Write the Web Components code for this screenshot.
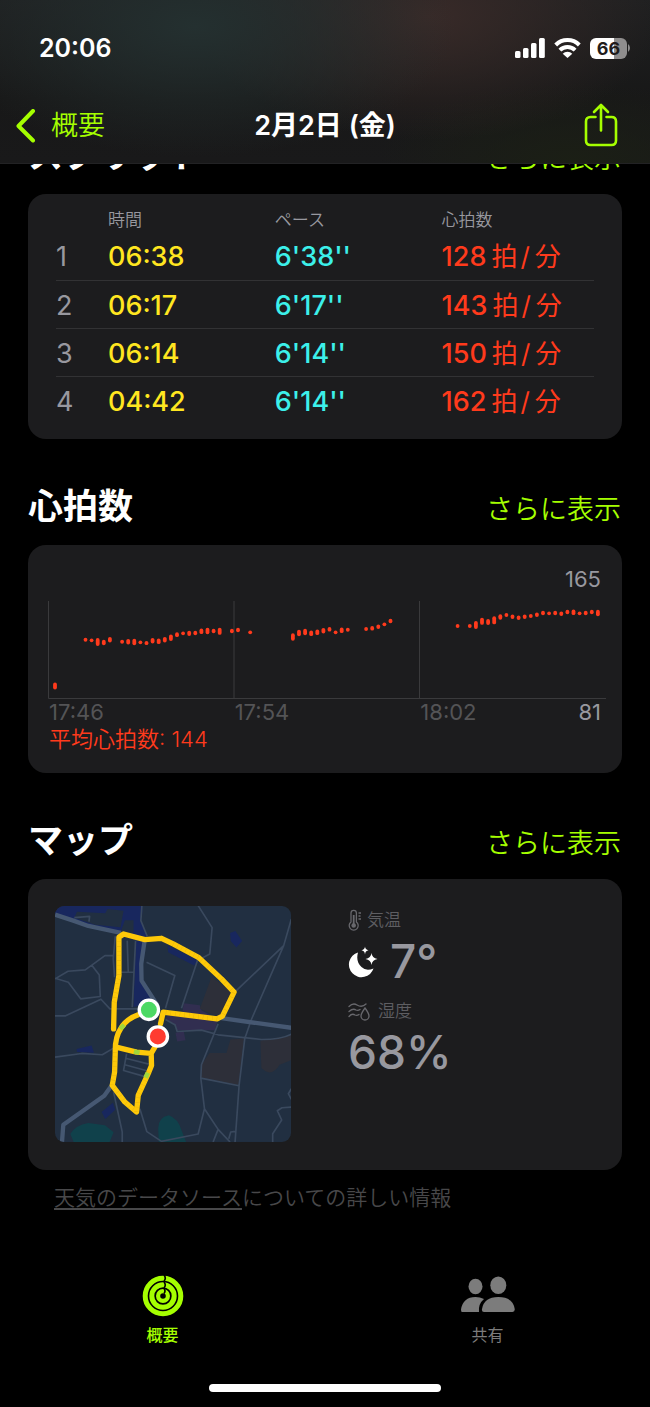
<!DOCTYPE html>
<html lang="ja">
<head>
<meta charset="utf-8">
<meta name="viewport" content="width=device-width, initial-scale=1">
<title>2月2日(金)</title>
<style>
  html { background: #000; }
  body {
    margin: 0;
    background: #000;
    color: #fff;
    font-family: Inter, "Noto Sans CJK JP", sans-serif;
    --accent: #a5ff00;
    --card: #1c1c1e;
    --gray: #98989f;
    --dim: #545456;
    --line: #323234;
    --red: #ff3a1c;
  }
</style>
</head>
<body>
<workout-page></workout-page>

<script>
const define = (name, html, setup) => {
  const tpl = document.createElement('template');
  tpl.innerHTML = html;
  customElements.define(name, class extends HTMLElement {
    constructor() {
      super();
      this.attachShadow({ mode: 'open' }).append(tpl.content.cloneNode(true));
    }
    connectedCallback() { if (setup) setup(this, this.shadowRoot); }
  });
};

define('status-bar', `
<style>
  :host { display: flex; justify-content: space-between; align-items: center; height: 80px; padding: 8px 19px 0 39px; }
  time { font-size: 25px; line-height: 30px; font-weight: 600; }
  .icons { display: flex; align-items: center; gap: 9px; }
  svg { display: block; }
  .battery { display: flex; align-items: center; gap: 1px; }
  .level {
    width: 37px; height: 21px; border-radius: 6px; text-align: center;
    font-size: 18px; line-height: 21px; font-weight: 700; color: #1f1c1c;
    background: linear-gradient(90deg, #fff 66%, #8f8d8d 66%);
  }
</style>
<time>20:06</time>
<div class="icons">
  <svg width="30" height="20" viewBox="0 0 30 20" fill="#fff" aria-hidden="true">
    <rect x="0" y="13" width="5.500" height="7" rx="1.500"/><rect x="8" y="10" width="5.500" height="10" rx="1.500"/>
    <rect x="16" y="5" width="5.500" height="15" rx="1.500"/><rect x="24" y="0" width="5.800" height="20" rx="1.500"/>
  </svg>
  <svg width="27" height="20" viewBox="0 0 27 20" aria-hidden="true">
    <g fill="none" stroke="#fff" stroke-width="4"><path d="M1.700 7a16.700 16.700 0 0 1 23.600 0"/><path d="M5.900 12.200a10.700 10.700 0 0 1 15.200 0"/></g>
    <path fill="#fff" d="M8.700 15.800a6.800 6.800 0 0 1 9.600 0L13.500 20z"/>
  </svg>
  <div class="battery"><span class="level">66</span>
    <svg width="3" height="8" viewBox="0 0 3 8" aria-hidden="true"><path fill="#8f8d8d" d="M0 0a5 5 0 0 1 0 8z"/></svg>
  </div>
</div>`);

define('nav-bar', `
<style>
  :host { display: grid; grid-template-columns: 1fr auto 1fr; align-items: center; height: 75px; padding: 0 16px; }
  a { display: flex; align-items: center; gap: 15px; color: var(--accent); text-decoration: none; font-size: 27px; line-height: 32px; font-weight: 350; }
  h1 { margin: 0; font-size: 27px; line-height: 32px; font-weight: 600; }
  button { justify-self: end; margin: 0 16px 2px 0; padding: 0; border: 0; background: none; color: var(--accent); }
  svg { display: block; fill: none; stroke: currentColor; stroke-linecap: round; stroke-linejoin: round; }
</style>
<a href="#summary"><svg width="20" height="34" viewBox="0 0 20 34" stroke-width="4"><path d="M17 2 2.500 17 17 31.500"/></svg><span>概要</span></a>
<h1><slot></slot></h1>
<button aria-label="共有"><svg width="34" height="44" viewBox="0 0 34 44" stroke-width="2.600">
  <path d="M11.500 14H6.500Q2 14 2 18.500V37.500Q2 42 6.500 42H27.500Q32 42 32 37.500V18.500Q32 14 27.500 14H22.500M17 27.500V2.500M10 9 17 2l7 7"/>
</svg></button>`);

define('top-header', `
<style>
  :host {
    display: block; position: sticky; top: 0; z-index: 2; border-bottom: 1px solid #222224;
    background:
      radial-gradient(ellipse 40% 80% at 30% 16%, #243030, #24303000),
      radial-gradient(ellipse 36% 76% at 66% 10%, #382a28, #382a2800),
      radial-gradient(ellipse 30% 50% at 88% 100%, #1b1f15, #1b1f1500),
      linear-gradient(#1f2021, #181818 60%, #19191a);
  }
</style>
<slot></slot>`);

define('metric-section', `
<style>
  :host { display: block; }
  header { display: flex; justify-content: space-between; align-items: baseline; height: 64px; padding: 42px 1px 0 0; }
  h2 { margin: 0; font-size: 35px; line-height: 50px; font-weight: 700; }
  a { color: var(--accent); font-size: 27px; line-height: 40px; font-weight: 350; text-decoration: none; }
  .card { background: var(--card); border-radius: 18px; }
</style>
<header><h2></h2><a href="#more">さらに表示</a></header>
<div class="card"><slot></slot></div>`,
(el, root) => { root.querySelector('h2').textContent = el.getAttribute('heading'); });

define('splits-table', `
<style>
  :host { display: block; padding: 0 28px 15px; }
  table { width: 100%; table-layout: fixed; border-collapse: separate; border-spacing: 0; }
  th, td { box-sizing: border-box; padding: 0; text-align: left; white-space: nowrap; }
  thead th { height: 38px; padding-top: 14px; font-size: 17px; line-height: 24px; font-weight: 350; color: var(--gray); }
  .n { width: 52px; } .w { width: 31%; }
  tbody th, td { height: 48px; padding-top: 2px; font-size: 27px; line-height: 40px; font-weight: 500; }
  tbody th { color: var(--gray); font-weight: 400; }
  tbody tr + tr > * { border-top: 1px solid var(--line); }
  .time { color: #ffe620; } .pace { color: #3cf0ea; } .bpm { color: var(--red); }
  .unit { margin-left: 5px; font-size: 26px; font-weight: 400; }
  .unit i { font-style: normal; margin: 0 5px 0 3px; }
</style>
<table>
  <thead><tr><th class="n"></th><th class="w">時間</th><th class="w">ペース</th><th>心拍数</th></tr></thead>
  <tbody></tbody>
</table>`,
(el, root) => {
  const rows = [['06:38', `6'38''`, 128], ['06:17', `6'17''`, 143], ['06:14', `6'14''`, 150], ['04:42', `6'14''`, 162]];
  root.querySelector('tbody').innerHTML = rows.map(([t, p, b], i) =>
    `<tr><th scope="row">${i + 1}</th><td class="time">${t}</td><td class="pace">${p}</td><td class="bpm">${b}<span class="unit">拍<i>/</i>分</span></td></tr>`).join('');
});

define('heart-chart', `
<style>
  :host { display: block; padding: 20px 16px 20px 20px; font-size: 22px; line-height: 28px; color: var(--gray); }
  .max { padding-right: 5px; text-align: right; }
  svg { display: block; width: 100%; margin-top: 8px; }
  .axis { display: grid; grid-template-columns: repeat(3, 1fr); line-height: 27px; color: var(--dim); padding-left: 1px; }
  .last { display: flex; justify-content: space-between; padding-right: 5px; }
  .last b { font-weight: 400; color: var(--gray); }
  p { margin: 0; padding-left: 1px; line-height: 27px; color: var(--red); font-weight: 350; }
</style>
<div class="max">165</div>
<svg viewBox="0 0 558 98" role="img" aria-label="心拍数"><path d="M.5 0V97.500H558M186 0V97M371.500 0V97" fill="none" stroke="#3a3a3c"/><g stroke="#ff3a1c" stroke-width="3.800" stroke-linecap="round"></g></svg>
<div class="axis"><span>17:46</span><span>17:54</span><span class="last">18:02<b>81</b></span></div>
<p>平均心拍数: 144</p>`,
(el, root) => {
  // [sample index, centre of the range, height of the range]
  const samples = [[0,85,7],[5,38.7,4],[6,39.3,3.8],[7,41,8],[8,41.5,5.5],[9,38.7,5.5],[11,40.7,4],[12,40.7,5.5],[13,41,6.5],[14,41.3,3.8],[15,42,4.2],[16,39.7,5.5],[17,40.3,5.5],[18,38.7,5.5],[19,36.7,6.5],[20,33.7,4.8],[21,32.3,3.8],[22,32.3,5.3],[23,32,4.5],[24,30.3,5.5],[25,30,6.3],[26,30,4.5],[27,30.3,7],[29,30,4.5],[30,29,4.5],[32,31.3,3.8],[39,36,7.5],[40,32,6.5],[41,31,6.5],[42,32.3,5.5],[43,31.3,5.5],[44,29.7,5.5],[45,28.3,4.5],[46,31.3,3.8],[47,29.3,5.5],[48,28.7,4],[51,28,4],[52,27.3,4.5],[53,25.7,4.5],[54,23.3,3.8],[55,20,4.5],[66,25,3.8],[68,25,4],[69,24,8],[70,20.3,7],[71,21,6],[72,19.3,8],[73,16,5.5],[74,14,4],[75,15.7,4.5],[76,16.7,4.5],[77,15.7,4.5],[78,15,4],[79,13.7,4.5],[80,12,4.5],[81,12.3,3.8],[82,12,4.5],[83,12.7,4.5],[84,11,4.5],[85,11.3,5.5],[86,12.3,3.8],[87,12,4.5],[88,11,4.5],[89,12,6.5]];
  root.querySelector('g').innerHTML = samples.map(([i, y, h]) => {
    const half = Math.max(h - 3.8, .02) / 2;
    return `<path d="M${(7 + i * 6.1).toFixed(1)} ${(y - half).toFixed(2)}V${(y + half).toFixed(2)}"/>`;
  }).join('');
});

define('route-map', `
<style>:host { display: block; width: 236px; } svg { display: block; width: 100%; border-radius: 9px; }</style>
<svg viewBox="30 31 709 708" role="img" aria-label="ルートの地図">
  <rect x="30" y="30" width="710" height="710" fill="#212f41"/>
  <g fill="#18275e">
    <path d="M30 30H294L290 75 307 122 288 180 291 260 326 318 262 336 273 140 228 112 85 78 30 55z"/>
    <path d="M368 150 460 193 448 210 370 170zM556 112 572 106 592 136 575 156 558 136zM95 461 140 450 147 472 96 470zM170 650 204 622 211 643 181 671z"/>
  </g>
  <path fill="#212f41" d="M96 48 181 53 188 40 236 45 227 95 150 87 88 66zM240 74H266V112H226zM218 125H273L266 336H214z"/>
  <g fill="#312e50"><path d="M417 323 465 329 470 345 520 370 510 404 397 404 390 386 362 370 373 350 412 354zM392 412 417 408 422 434 397 438z"/></g>
  <g fill="#2d2f39"><path d="M500 245 568 290 530 368 465 340zM557 432 598 429 581 569 469 546 472 505 494 473 545 473zM647 436 740 418V494L705 508Q680 548 650 518z"/></g>
  <g fill="#10414b"><path d="M76 716Q90 690 130 683L180 690 206 711 194 740H86zM340 700Q340 665 372 660 400 670 410 705L424 740H342z"/></g>
  <g fill="none" stroke="#3a495e" stroke-width="5" stroke-linejoin="round">
    <path d="M291 30 288 75 307 122M460 30 502 96 495 175 458 195 410 338M740 70 717 150 570 290M717 150 620 372 600 430 583 571 571 740M30 250 69 227 121 223 180 180H205M30 248 70 260 107 310 166 303 163 238 140 208M30 361H62L168 311 195 340H300M30 485 110 474 172 478 206 458M211 122 205 190 209 245M247 135 250 230M272 135 262 335M220 230H268M305 200 390 240 362 338M88 66 134 62 132 78M390 386 397 408 470 404 520 418 650 432Q710 432 740 416M520 385 470 508 468 548 479 640 460 716 350 738 306 709 285 640M468 548 583 571M479 640 520 702 556 740M520 702 505 740M552 730 558 710 572 708M206 590 232 710V740M740 580 731 595 740 612M740 635 712 637 698 646 711 674 684 715V740M245 475 236 525 298 543M245 489 312 506M240 508 306 526M362 372 390 388"/>
  </g>
  <g fill="none" stroke="#465872" stroke-linejoin="round">
    <path stroke-width="13" d="M30 57 85 75 130 91 228 112M300 130 289 205 290 255 338 330M200 570 178 601 55 688 51 740M530 368 740 397"/>
  </g>
  <path fill="none" stroke="#fec909" stroke-width="16" stroke-linejoin="round" stroke-linecap="round" d="M206 400 208 320 222 240V125L236 115 300 132 350 128 385 145 462 186 530 250 568 290 533 362 517 370 355 350 347 385M280 358Q245 370 228 398 210 425 211 470L209 530 202 570 240 620 275 650 280 600 312 530 320 510 319 474 330 455M214 455 275 470 319 474"/>
  <path fill="none" stroke="#e1ae0a" stroke-width="14" stroke-dasharray="1 13" d="M208 320 222 240V125M385 145 462 186 530 250 568 290 533 362M517 370 355 350M211 470 209 530 202 570 240 620 275 650 280 600 312 530"/>
  <path fill="none" stroke="#a1d73a" stroke-width="14" d="M226 400 238 388M267 468 284 472M302 547 309 532"/>
  <g stroke="#fff" stroke-width="10"><circle cx="312" cy="343" r="29" fill="#4cd964"/><circle cx="339" cy="423" r="29" fill="#ff3b30"/></g>
</svg>`);

define('weather-info', `
<style>
  :host { display: grid; grid-template-columns: auto 1fr; column-gap: 57px; padding: 27px 27px 28px; }
  dl { margin: 0; }
  dt { display: flex; align-items: center; gap: 5px; font-size: 17px; line-height: 28px; font-weight: 350; color: #5e5e62; }
  .humid { gap: 8px; }
  dd { display: flex; align-items: center; gap: 12px; margin: 0 0 8px; height: 55px; font-size: 46px; line-height: 55px; font-weight: 500; color: var(--gray); }
  svg { display: block; flex: none; }
</style>
<slot></slot>
<dl>
  <dt><svg width="14" height="22" viewBox="0 0 14 22" fill="none" stroke="#68686d" stroke-width="1.300">
    <path d="M3 13V4a2.700 2.700 0 0 1 5.400 0V13a4.500 4.500 0 1 1-5.400 0zM10.500 4H13M10.500 7H12.500M10.500 10H13"/><circle cx="5.700" cy="16.500" r="2.300" fill="#68686d" stroke="none"/><path d="M5.700 6V16" stroke-width="1.800"/></svg>気温</dt>
  <dd><svg width="30" height="34" viewBox="0 0 30 34" fill="#fff">
    <path d="M10 7.500A12.600 12.600 0 1 0 25.500 23.500Q18 26.500 13.500 22 7.500 16.500 10 7.500z"/>
    <path d="M23.500 8Q24 13 29.500 14 24 15 23.500 20 23 15 17.500 14 23 13 23.500 8zM17 1.500Q17.300 4.700 20.500 5.300 17.300 5.900 17 9.500 16.700 5.900 13.500 5.300 16.700 4.700 17 1.500z"/></svg>7°</dd>
  <dt class="humid"><svg width="22" height="20" viewBox="0 0 22 20" fill="none" stroke="#68686d" stroke-width="1.300" stroke-linecap="round">
    <path d="M1 5.500Q5 1.500 9 4 14 7 18 3M1 10.500Q5 7 8 9 10 10 12 8.500M1 15.500Q4 12 7 14 9 15 11 13.500M17 7Q21 12.500 21 15a4 4 0 0 1-8 0Q13 12.500 17 7z"/></svg>湿度</dt>
  <dd>68%</dd>
</dl>`);

define('tab-bar', `
<style>
  :host { display: block; padding: 0 0 14px; }
  nav { display: grid; grid-template-columns: 1fr 1fr; }
  a { display: flex; flex-direction: column; align-items: center; gap: 6px; color: #7c7c7c; text-decoration: none; font-size: 16px; line-height: 24px; font-weight: 400; }
  a[aria-current] { color: var(--accent); font-weight: 500; }
  svg { display: block; }
  .home { width: 232px; height: 8px; margin: 37px auto 0; border-radius: 4px; background: #fff; }
</style>
<nav>
  <a href="#summary" aria-current="page">
    <svg width="42" height="42" viewBox="0 0 42 42"><g fill="none" stroke="#a5ff00" stroke-width="5">
      <circle cx="21" cy="21" r="17.800"/><circle cx="21" cy="21" r="11.200"/><circle cx="21" cy="21" r="4.900" stroke-width="4.200"/></g>
      <path d="M22 0Q24.500 3.300 22 6M22 7Q24.500 10 22 13M22 13.500Q24 16 22 18.500" fill="none" stroke="#000" stroke-width="1.600"/></svg>概要</a>
  <a href="#sharing">
    <svg width="54" height="42" viewBox="0 0 54 42" fill="#7c7c7c">
      <ellipse cx="14.500" cy="11.500" rx="7" ry="7.700"/><ellipse cx="37.300" cy="10.300" rx="8" ry="8.800"/>
      <path d="M1 37Q0 37 0 34.500 2 22 14.500 22 19 22 23 24 17 29 18 37z"/>
      <path d="M23 37Q20.500 37 21 34 23 22 37.300 22 52 22 53.700 34 54 37 51.500 37z"/></svg>共有</a>
</nav>
<div class="home"></div>`);

define('workout-page', `
<style>
  :host { display: block; }
  .view { overflow: hidden; }
  main { margin-top: -76px; padding: 0 28px; }
  .source { margin: 0; padding: 12px 26px 61px; font-size: 21px; line-height: 32px; font-weight: 350; color: #48484a; }
  .source a { color: inherit; text-decoration: underline; text-underline-offset: 3px; }
</style>
<top-header><status-bar></status-bar><nav-bar>2月2日 (金)</nav-bar></top-header>
<div class="view"><main>
  <metric-section heading="スプリット"><splits-table></splits-table></metric-section>
  <metric-section heading="心拍数"><heart-chart></heart-chart></metric-section>
  <metric-section heading="マップ"><weather-info><route-map></route-map></weather-info></metric-section>
  <p class="source"><a href="#source">天気のデータソース</a>についての詳しい情報</p>
</main></div>
<tab-bar></tab-bar>`);
</script>
</body>
</html>
